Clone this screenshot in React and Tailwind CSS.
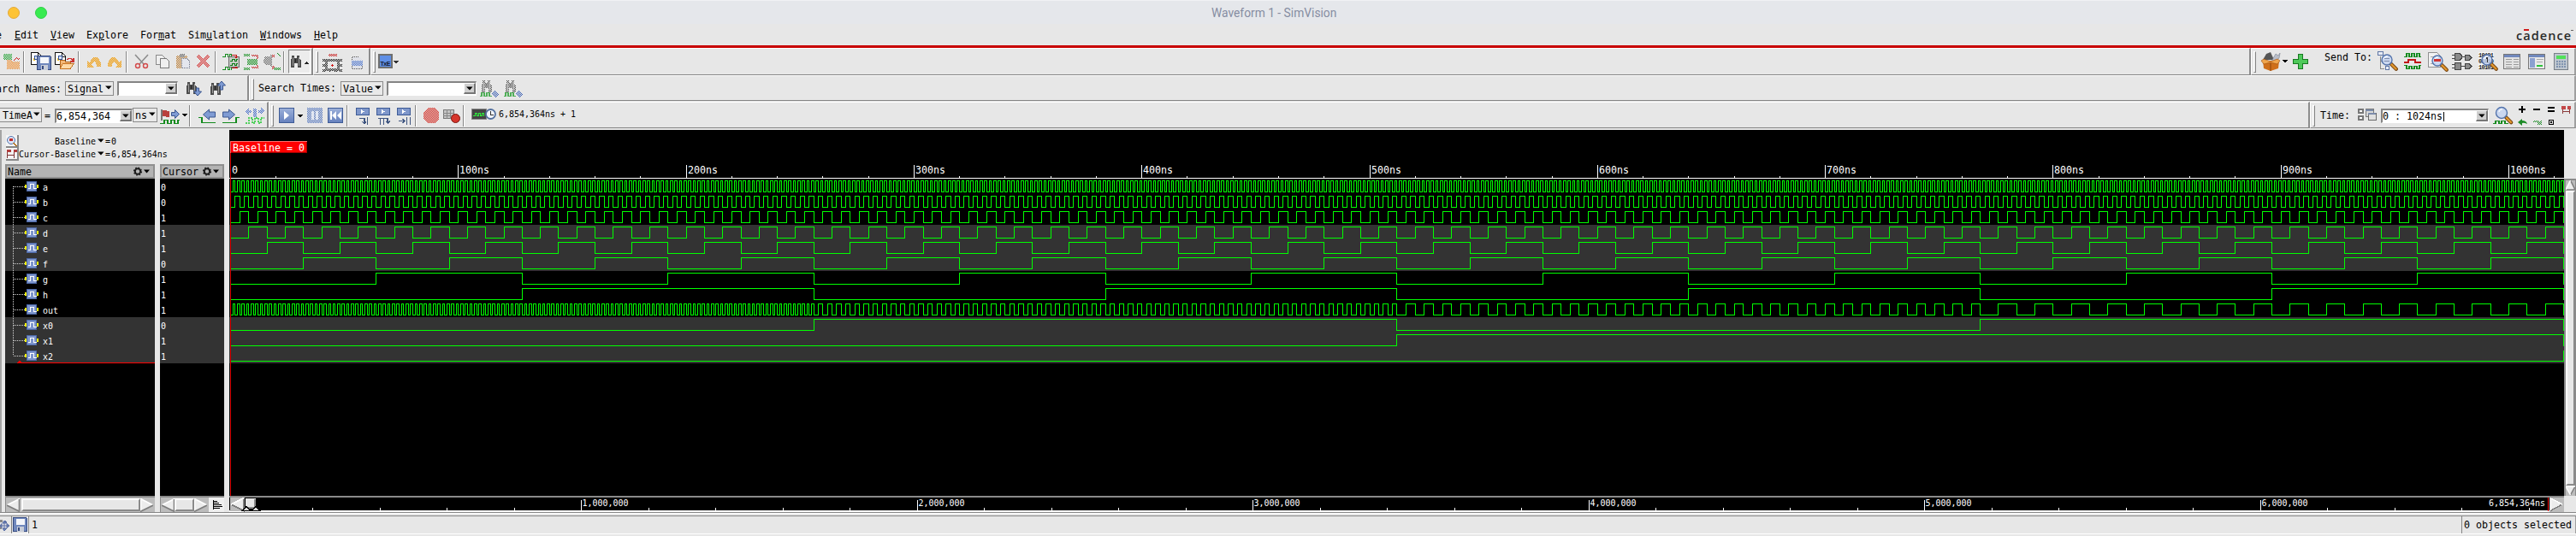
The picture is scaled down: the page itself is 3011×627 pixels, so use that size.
import React from "react";

const MONO = "font-['DejaVu_Sans_Mono',monospace]";

/* Icon drawn in window coordinates; x/w/y/h give the region it covers. */
function Ico({ x, w, y = 57, h = 30, className = "", children }) {
  return (
    <svg className={"block shrink-0 " + className} width={w} height={h} viewBox={`${x} ${y} ${w} ${h}`} shapeRendering="crispEdges">
      {children}
    </svg>
  );
}

function Panel({ className, children }) {
  return (
    <div className={"flex shrink-0 items-start overflow-hidden border-t border-l border-t-white border-l-white border-r-2 border-b border-b-[#858585] bg-[#e7e7e7] " + className}>
      {children}
    </div>
  );
}

const Sep = () => (
  <div className="mt-[3px] h-[25px] w-[2px] shrink-0 border-l border-l-[#858585] border-r border-r-white" />
);
const Handle = () => (
  <div className="mt-[3px] ml-[2px] h-[25px] w-[3px] shrink-0 border-l border-l-white border-t border-t-white border-r border-b border-r-[#858585] border-b-[#858585]" />
);
const T = ({ className = "", small = false, children }) => (
  <span className={"shrink-0 whitespace-pre " + (small ? "text-[9.965px] leading-[15px] " : "text-[11.63px] leading-[16px] ") + className}>
    {children}
  </span>
);

const Caret = ({ className = "" }) => (
  <svg className={"block shrink-0 " + className} width="8" height="5" viewBox="0 0 8 5">
    <path d="M0 .5H7.5L4 4.5Z" fill="#000" />
  </svg>
);

function Select({ className, children }) {
  return (
    <div className={"flex h-[17px] shrink-0 items-center justify-between border border-[#8a8a8a] bg-[#e9e9e9] pr-[1px] " + className}>
      <T>{children}</T>
      <Caret className="-mt-[2px]" />
    </div>
  );
}

function Entry({ className, children }) {
  return (
    <div className={"flex h-[17px] shrink-0 justify-between border-t-2 border-l-2 border-r border-b border-t-[#858585] border-l-[#858585] border-r-white border-b-white bg-white " + className}>
      <T className="-mt-px">{children}</T>
      <div className="flex h-[13px] w-[14px] items-center justify-center border-t border-l border-r-2 border-b-2 border-t-white border-l-white border-r-[#777] border-b-[#777] bg-[#cfcfcf]">
        <Caret />
      </div>
    </div>
  );
}

const DIS = { mask: "url(#stipple)" };

function Defs() {
  return (
    <svg className="block h-0 w-0">
      <defs>
        <pattern id="chk" width="2" height="2" patternUnits="userSpaceOnUse">
          <path d="M0 0h1v1h-1zM1 1h1v1h-1z" fill="#fff" />
        </pattern>
        <mask id="stipple" maskUnits="userSpaceOnUse" x="0" y="0" width="3011" height="627">
          <rect width="3011" height="627" fill="url(#chk)" />
        </mask>
        <linearGradient id="blu" x1="0" y1="0" x2="0" y2="1">
          <stop offset="0" stopColor="#9db1da" />
          <stop offset="1" stopColor="#6580bd" />
        </linearGradient>
      </defs>
    </svg>
  );
}

const Floppy = ({ x, y }) => (
  <g>
    <path d={`M${x} ${y}h15l1 1v15h-16z`} fill="#7088bd" stroke="#34497f" strokeWidth="1" />
    <path d={`M${x + 3} ${y + 1}h10v7h-10z`} fill="#f4f6fa" />
    <path d={`M${x + 4} ${y + 10}h8v6h-8z`} fill="#c8cdd8" />
    <path d={`M${x + 5} ${y + 11}h2v4h-2z`} fill="#34497f" />
  </g>
);
const Doc = ({ x }) => (
  <g>
    <path d={`M${x} 61.5h8l4 4v10h-12z`} fill="#fff" stroke="#111" />
    <path d={`M${x + 8} 61v5h4`} fill="none" stroke="#111" />
    <path d={`M${x + 2} 68h2v3h-2z`} fill="#f5c52c" />
    <path d={`M${x + 4} 65.5h4v4h-4z`} fill="#dfe6f5" stroke="#34569a" />
  </g>
);
const Folder = ({ x, y }) => (
  <g>
    <path d={`M${x} ${y + 11}V${y + 1}h5l1 2h6v3`} fill="#f3b877" stroke="#b4651c" />
    <path d={`M${x} ${y + 11}l3 -6h13l-4 6z`} fill="#ffd9a6" stroke="#c4711f" />
  </g>
);
const Binoc = ({ x, y }) => (
  <g>
    <path d={`M${x + 2} ${y}h3v3h3v-3h3v3l2 3v8h-4v-5h-4v5h-4v-8l1 -3z`} fill="#4c4c4c" />
    <path d={`M${x + 3.5} ${y + 2}v10M${x + 10.5} ${y + 2}v10`} stroke="#9c9c9c" />
    <path d={`M${x + 6} ${y + 4}h1v4h-1z`} fill="#222" />
  </g>
);
const Wave = ({ x, y, c = "#138a1d", n = 3 }) => {
  let d = `M${x} ${y + 4}h2`;
  for (let i = 0; i < n; i++) d += "v-4h3v4h3";
  return <path d={d} fill="none" stroke={c} strokeWidth="1.3" />;
};
const Mag = ({ x, y, r = 6 }) => (
  <g shapeRendering="auto">
    <path d={`M${x + r * 0.8} ${y + r * 0.8}l6 6`} stroke="#6d3c0b" strokeWidth="4.2" strokeLinecap="round" />
    <path d={`M${x + r * 0.9} ${y + r * 0.9}l5.2 5.2`} stroke="#e0962e" strokeWidth="2.4" strokeLinecap="round" />
    <circle cx={x} cy={y} r={r} fill="#c3d3f2" fillOpacity=".8" stroke="#5474ac" strokeWidth="1.4" />
    <path d={`M${x - 3} ${y - 1}a3.4 3.4 0 0 1 4 -3`} fill="none" stroke="#fff" strokeWidth="1.2" />
  </g>
);
const Btn = ({ x, y = 125 }) => (
  <rect x={x + 0.5} y={y + 0.5} width="17" height="17" fill="url(#blu)" stroke="#3f5c97" strokeWidth="1.6" />
);
const Arrow = ({ d }) => <path d={d} fill="#7f9bd3" stroke="#3b568f" shapeRendering="auto" />;

function ToolbarMain() {
  return (
    <div className="flex h-8">
      <Panel className="w-[366px] border-l-0 border-r-[#8c8c8c]">
        <Ico x={0} w={27}>
          <g style={DIS}>
            <path d="M4 63h10v7h-10z" fill="#1fa030" />
            <path d="M16 71q3-5 7-1" stroke="#c81818" strokeWidth="2" fill="none" />
            <path d="M8 70h6l1 2h8v9h-15z" fill="#e78c32" />
          </g>
          <path d="M8 72h6l1 2h7v6h-14z" fill="#f2b780" fillOpacity=".5" />
        </Ico>
        <Sep />
        <Ico x={29} w={33}>
          <Doc x={36.5} />
          <Floppy x={43.5} y={65.5} />
        </Ico>
        <Ico x={62} w={29}>
          <Doc x={64.5} />
          <path d="M78 70q4-4 7 1M86 68v4h-4" fill="none" stroke="#c33" strokeWidth="1.3" />
          <Folder x={70.5} y={69} />
        </Ico>
        <Sep />
        <Ico x={93} w={30}>
          <path d="M118 78c0-14-10-14-13-5l-3-2v8h8l-3-3c3-6 6-4 6 2z" fill="#e08f14" style={DIS} />
          <path d="M118 78c0-14-10-14-13-5l-3-2v8h8l-3-3c3-6 6-4 6 2z" fill="#f7b53a" fillOpacity=".45" />
        </Ico>
        <Ico x={123} w={24}>
          <path d="M126 78c0-14 10-14 13-5l3-2v8h-8l3-3c-3-6-6-4-6 2z" fill="#e08f14" style={DIS} />
          <path d="M126 78c0-14 10-14 13-5l3-2v8h-8l3-3c-3-6-6-4-6 2z" fill="#f7b53a" fillOpacity=".45" />
        </Ico>
        <Sep />
        <Ico x={149} w={29}>
          <g fill="none" shapeRendering="auto">
            <path d="M158 64l10 11M173 64l-10 11" stroke="#8d8d8d" strokeWidth="1.6" />
            <circle cx="161" cy="77" r="2.5" stroke="#d24a4a" strokeWidth="1.4" />
            <circle cx="170" cy="77" r="2.5" stroke="#d24a4a" strokeWidth="1.4" />
          </g>
        </Ico>
        <Ico x={178} w={24}>
          <path d="M182.500 64.500h7l3 3v8h-10z" fill="#efefef" stroke="#8a8a8a" />
          <path d="M187.500 68.500h7l3 3v8h-10z" fill="#efefef" stroke="#7a7a7a" />
        </Ico>
        <Ico x={202} w={24}>
          <g style={DIS}>
            <path d="M206 65h13v15h-13z" fill="#b97a2f" />
            <path d="M210 63h6v4h-6z" fill="#555" />
          </g>
          <path d="M213 69h6l3 3v8h-9z" fill="#e4e6ee" />
          <path d="M212.500 68.500h6l3 3v8h-9z" fill="none" stroke="#6a7083" style={DIS} />
        </Ico>
        <Ico x={226} w={25}>
          <path d="M231 65l13 13M244 65l-13 13" stroke="#d52b2b" strokeWidth="3.500" style={DIS} />
          <path d="M231 65l13 13M244 65l-13 13" stroke="#d98a8a" strokeWidth="2.500" strokeOpacity=".5" shapeRendering="auto" />
        </Ico>
        <Sep />
        <Ico x={253} w={31}>
          <path d="M260 66.500h3v-3h3v3h2v-3h2v3" fill="none" stroke="#138a1d" />
          <path d="M260 81.500h3v-3h3v3h2v-3h2v3" fill="none" stroke="#138a1d" />
          <path d="M271 64.500h5v4M271 79.500h5v-3" fill="none" stroke="#c01818" />
          <rect x="267.500" y="66.500" width="12" height="12" fill="#c5ccc5" stroke="#6c6c6c" />
          <path d="M273 66h5l-2 3zM273 80h5l-2-3z" fill="#c01818" />
          <path d="M269 71.500h2v-2h3v2h2v-2h2M269 76.500h2v-2h3v2h2v-2h2" fill="none" stroke="#0b7a15" />
        </Ico>
        <Ico x={284} w={23}>
          <g style={DIS}>
            <path d="M285 63h7v3h-7zM285 79h7v3h-7zM289 69h12v7h-12z" fill="#0b8a15" />
            <path d="M294 64h8v5h-2v-3h-6zM294 80h8v-4h-2v2h-6z" fill="#c01818" />
          </g>
        </Ico>
        <Ico x={307} w={24}>
          <g style={DIS}>
            <path d="M309 66h7v-2h2v14h-2v-2h-5l-3-4z" fill="#666" />
            <path d="M318 64h3v3h-3zM318 77h3v4h-3z" fill="#c01818" />
            <path d="M320 65l3-2 5 3v-2l-4-2zM320 79h8v3h-8z" fill="#0b8a15" />
          </g>
        </Ico>
        <Sep />
        <div className="ml-[4px] mt-[1px] flex h-[28px] w-[26px] border-t border-l border-r border-b border-t-[#858585] border-l-[#858585] border-r-white border-b-white bg-[#ececec]">
          <Ico x={338} y={59} w={24} h={26}>
            <Binoc x={339} y={65} />
            <path d="M355 75h6l-3-3z" fill="#222" />
          </Ico>
        </div>
      </Panel>
      <Panel className="w-[67px] border-r-[#8c8c8c]">
        <Handle />
        <Ico x={372} w={34}>
          <g style={DIS}>
            <path d="M384 63h10v3h-10z" fill="#c81818" />
            <path d="M381.500 70.500h14v11h-14z" fill="none" stroke="#111" strokeWidth="3" />
            <path d="M377 69h3v3h-3zM377 75h3v3h-3zM377 81h3v3h-3zM397 69h3v3h-3zM397 75h3v3h-3zM397 81h3v3h-3zM384 82h3v2h-3zM391 82h3v2h-3z" fill="#111" />
          </g>
          <path d="M388 75h1v3h-1zM387 76h3v1h-3z" fill="#d01818" />
        </Ico>
        <Ico x={406} w={24}>
          <path d="M411.500 66.500h8l4 4v10h-12z" fill="#dfe1e8" />
          <g style={DIS}>
            <path d="M411.500 66.500h8l4 4v10h-12z" fill="none" stroke="#555" />
            <path d="M411 71h13v6h-13z" fill="#4b74cc" />
          </g>
        </Ico>
      </Panel>
      <Panel className="w-[2198px] border-r-[#8c8c8c]">
        <Handle />
        <Ico x={439} w={32}>
          <rect x="443" y="64" width="14.500" height="15" fill="#5f8fe6" stroke="#6f6f6f" strokeWidth="2" />
          <text x="444.500" y="76.500" fontSize="7" fontWeight="bold" fontFamily="Liberation Sans" fill="#14182c" textLength="12">TxE</text>
          <path d="M460 71h6l-3 4z" fill="#333" />
        </Ico>
      </Panel>
      <Panel className="w-[380px] border-r-[#a0a0a0]">
        <Handle />
        <Ico x={2637} w={80}>
          <g shapeRendering="auto">
            <path d="M2645 70l4-7 5-2 4 9z" fill="#555" />
            <path d="M2655 72l5-9 3 2 2-3-1 6-5 4z" fill="#b9bec9" stroke="#7b8190" strokeWidth=".6" />
            <path d="M2645 71h19l-1 9-9 3-8-3z" fill="#cf6f1a" />
            <path d="M2643 71l3-2 8 3 8-3 3 2-3 4-8-2-8 2z" fill="#f0a54c" stroke="#9c4c0c" strokeWidth=".6" />
            <path d="M2654 74v9" stroke="#8c440b" />
          </g>
          <path d="M2668 70h6l-3 3.500z" fill="#000" />
          <path d="M2686.500 63.500h5v6h6v5h-6v6h-5v-6h-6v-5h6z" fill="#4fc95a" stroke="#177a21" />
        </Ico>
        <T className="mt-[2px] w-[61px]">Send To:</T>
        <Ico x={2778} w={28}>
          <path d="M2782 66v14h5M2782 71h5" fill="none" stroke="#888" />
          <path d="M2779.500 60.500h6v4h-6zM2788.500 77.500h4v4h-4z" fill="#e8ecf5" stroke="#5f76a5" />
          <Mag x={2790} y={70} />
          <path d="M2787 68.500h6M2787 71.500h6" stroke="#7f8dab" />
        </Ico>
        <Ico x={2806} w={28}>
          <path d="M2810 66.500h3v-4h3v4h3v-4h3v4h3v-4h3v4h2M2810 76.500h3v4h3v-3h3v3h3v-3h3v3h3v-4h2" fill="none" stroke="#138a1d" strokeWidth="1.300" />
          <path d="M2810 73h5v-3h8v3h7" fill="none" stroke="#c01818" strokeWidth="2" />
        </Ico>
        <Ico x={2834} w={31}>
          <path d="M2838.500 61.500h10l4 4v13h-14z" fill="#f2f2f2" stroke="#909090" />
          <path d="M2841 66h6M2841 74h6" stroke="#aaa" />
          <Mag x={2849} y={71} />
          <path d="M2845 69h8v3h-8z" fill="#cf3434" />
        </Ico>
        <Ico x={2865} w={29}>
          <g fill="#8b8b8b" stroke="#444">
            <path d="M2869 62.500h6l2 2v4l-2 2h-6zM2869 73.500h7v8h-7zM2881 64.500h5l2 2v2l-2 2h-5zM2881 74.500h5l2 2v2l-2 2h-5z" />
          </g>
          <path d="M2866 64.500h3M2866 68.500h3M2866 75.500h3M2866 79.500h3M2877 66.500h4M2876 77.500h5M2888 67.500h2M2888 77.500h2" stroke="#444" />
        </Ico>
        <Ico x={2894} w={30}>
          <rect x="2897" y="61" width="18" height="20" fill="#f6f6f6" />
          <g fontSize="7" fontWeight="bold" fontFamily="Liberation Mono" fill="#222">
            <text x="2897" y="67" textLength="18">10101</text>
            <text x="2897" y="73.500" textLength="18">01010</text>
            <text x="2897" y="80.500" textLength="18">10101</text>
          </g>
          <Mag x={2907} y={70} />
          <path d="M2906 68h1.500v5" stroke="#333" fill="none" strokeWidth="1.200" />
        </Ico>
        <Ico x={2924} w={28}>
          <rect x="2926.500" y="63.500" width="19" height="17" fill="#e3e3e3" stroke="#777" />
          <path d="M2927 64h18v3h-18z" fill="#7088bd" />
          <path d="M2929 69.500h7M2929 72.500h7M2929 75.500h7M2929 78.500h7M2938 69.500h6M2938 72.500h6M2938 75.500h6M2938 78.500h6" stroke="#9a9a9a" />
        </Ico>
        <Ico x={2952} w={29}>
          <rect x="2955.500" y="63.500" width="19" height="17" fill="#eaeaea" stroke="#777" />
          <path d="M2956 64h18v3h-18z" fill="#7088bd" />
          <path d="M2957 68h6v11h-6z" fill="#8ba0d0" />
          <path d="M2965 69.500h8M2965 72.500h7" stroke="#aaa" />
          <path d="M2965 76h7v2h-7z" fill="#2fc43b" />
        </Ico>
        <Ico x={2981} w={26}>
          <rect x="2985.500" y="62.500" width="16" height="19" fill="#bfc7cf" stroke="#777f87" />
          <path d="M2988 65h11v4h-11z" fill="#50e158" />
          <path d="M2988 72h11M2988 75h11M2988 78h11" stroke="#7f93b0" strokeWidth="2" strokeDasharray="2 1" />
        </Ico>
      </Panel>
    </div>
  );
}

function ToolbarSearch() {
  return (
    <div className="flex h-[31px] pb-[1px]">
      <Panel className="w-[291px] border-l-0 border-r-[#8c8c8c]">
        <T className="-ml-[19px] mt-[7px] w-[95px]">Search Names:</T>
        <Select className="mt-[6px] w-[57px] pl-[2px]">Signal</Select>
        <Entry className="ml-[4px] mt-[6px] w-[71px]" />
        <Ico x={208} y={89} w={33} h={28}>
          <Binoc x={217} y={96} />
          <Arrow d="M229.500 103h3v4h3l-4.500 5-4.500-5h3z" />
        </Ico>
        <Ico x={241} y={89} w={29} h={28}>
          <Binoc x={245} y={97} />
          <Arrow d="M257.500 105h3v-5h3l-4.500-5-4.500 5h3z" />
        </Ico>
      </Panel>
      <Panel className="w-[2720px] border-r-[#a0a0a0]">
        <Handle />
        <T className="ml-[5px] mt-[6px] w-[96px]">Search Times:</T>
        <Select className="mt-[6px] w-[50px] pl-[2px]">Value</Select>
        <Entry className="ml-[4px] mt-[6px] w-[105px]" />
        <Ico x={557} y={89} w={29} h={28}>
          <g style={DIS}>
            <Binoc x={562} y={94} />
            <path d="M574 110l5-4 4 4-4 4z" fill="#3f62b4" />
          </g>
          <Wave x={561} y={108.5} n={2} c="#4fae57" />
        </Ico>
        <Ico x={586} y={89} w={28} h={28}>
          <g style={DIS}>
            <Binoc x={590} y={94} />
            <path d="M602 110l5-4 4 4-4 4z" fill="#3f62b4" />
          </g>
          <Wave x={589} y={108.5} n={2} c="#4fae57" />
        </Ico>
      </Panel>
    </div>
  );
}

const Step = ({ x, children }) => (
  <>
    <rect x={x + 0.5} y="125.500" width="15" height="8" fill="#7f97cb" stroke="#3f5c97" />
    <path d={`M${x + 6} 127l4 2.500-4 2.500z`} fill="#fff" />
    <g stroke="#3f5580" fill="none" strokeWidth="1.300">{children}</g>
  </>
);

function ToolbarTime() {
  return (
    <div className="flex h-[33px] pb-[2px]">
      <Panel className="w-[314px] border-l-0 border-r-[#8c8c8c]">
        <Select className="-ml-[1px] mt-[6px] w-[50px] pl-[3px]">TimeA</Select>
        <T className="ml-[3px] mt-[7px] w-[12px]">=</T>
        <Entry className="mt-[7px] w-[91px]">6,854,364</Entry>
        <Select className="mt-[6px] w-[29px] pl-[2px]">ns</Select>
        <Ico x={184} y={119} w={37} h={30}>
          <path d="M189 127v13" stroke="#777" strokeWidth="1.500" />
          <path d="M190 128h4l1 1h3v7h-4l-1-1h-3z" fill="#b9403e" />
          <Arrow d="M200.500 130.500h4v-3l5 5-5 5v-3h-4z" />
          <path d="M187 143.500h5v-4h4v4h4v-4h4v4h4v-4h2" fill="none" stroke="#138a1d" strokeWidth="1.400" />
          <path d="M213 132h6l-3 3.500z" fill="#000" />
        </Ico>
        <Sep />
        <Ico x={223} y={119} w={33} h={30}>
          <path d="M232 136.500h4v6h16" fill="none" stroke="#138a1d" strokeWidth="1.500" />
          <Arrow d="M251.500 130v6h-7v3l-7-6 7-6v3z" />
        </Ico>
        <Ico x={256} y={119} w={27} h={30}>
          <path d="M260 142.500h16v-6h4" fill="none" stroke="#138a1d" strokeWidth="1.500" />
          <Arrow d="M260.500 130v6h7v3l7-6-7-6v3z" />
        </Ico>
        <Ico x={283} y={119} w={28} h={30}>
          <path d="M287 129l4-4v3h3v3h-3v3zM309 129l-4-4v3h-3v3h3v3zM296 126h4v10h-4z" fill="#3f68c8" style={DIS} />
          <path d="M287 143h4v-6h4v6h3v-6h4v6h3v-6h4" fill="none" stroke="#4fd05b" strokeWidth="1.500" strokeDasharray="2 1" />
        </Ico>
      </Panel>
      <Panel className="w-[2386px] border-r-[#8c8c8c]">
        <Handle />
        <Ico x={320} y={119} w={35} h={30}>
          <Btn x={326} />
          <path d="M332 129l6 5-6 5z" fill="#fff" shapeRendering="auto" />
          <path d="M348 133h6l-3 3.500z" fill="#000" />
        </Ico>
        <Ico x={355} y={119} w={25} h={30}>
          <rect x="359" y="125" width="18" height="18" fill="#5073bd" style={DIS} />
          <path d="M364 129h3v10h-3zM369 129h3v10h-3z" fill="#fff" fillOpacity=".7" />
        </Ico>
        <Ico x={380} y={119} w={25} h={30}>
          <Btn x={383} />
          <path d="M386 129h2v10h-2zM393 129v10l-5-5zM399 129v10l-5-5z" fill="#fff" shapeRendering="auto" />
        </Ico>
        <Sep />
        <Ico x={407} y={119} w={30} h={30}>
          <Step x={416}><path d="M420 137.500h6v6M423 141l3 3 2-3M429.500 136v9" /></Step>
        </Ico>
        <Ico x={437} y={119} w={24} h={30}>
          <Step x={440}><path d="M442 137.500h11v5M444.500 138v7M448.500 138v7M451 141l2.500 2.500 2-3" /></Step>
        </Ico>
        <Ico x={461} y={119} w={24} h={30}>
          <Step x={464}><path d="M466 140.500h6M470 138l3 2.500-3 2.500M475.500 136v9M479.500 136v9" /></Step>
        </Ico>
        <Sep />
        <Ico x={487} y={119} w={29} h={30}>
          <path d="M500 125h8l5 5v8l-5 5h-8l-5-5v-8z" fill="#c93028" style={DIS} />
          <path d="M500 125h8l5 5v8l-5 5h-8l-5-5v-8z" fill="#e2655f" fillOpacity=".35" />
        </Ico>
        <Ico x={516} y={119} w={25} h={30}>
          <rect x="518.500" y="127.500" width="12" height="10" fill="#c4c4c4" stroke="#777" />
          <path d="M522.500 127v11M526.500 127v11M518 131h13M518 134.500h13" stroke="#888" />
          <circle cx="532.500" cy="137.500" r="5" fill="#d6362c" stroke="#7d1610" shapeRendering="auto" />
        </Ico>
        <Sep />
        <Ico x={543} y={119} w={40} h={30}>
          <rect x="551.500" y="126.500" width="17" height="12" fill="#444" stroke="#888" />
          <path d="M553 134.500h2v-3h2v3h2v-3h2v3h2v-3h2v3" fill="none" stroke="#2ef03c" />
          <circle cx="573.500" cy="132.500" r="5.500" fill="#f2f5fb" stroke="#54719f" strokeWidth="1.800" shapeRendering="auto" />
          <path d="M573.500 129v4h3" fill="none" stroke="#333" />
        </Ico>
        <T small className="mt-[6px]">6,854,364ns + 1</T>
      </Panel>
      <Panel className="w-[311px] border-r-[#a0a0a0]">
        <Handle />
        <T className="ml-[6px] mt-[7px] w-[40px]">Time:</T>
        <Ico x={2752} y={119} w={31} h={30}>
          <rect x="2757" y="127" width="5" height="4" fill="#fff" stroke="#777" strokeWidth="1.500" />
          <rect x="2757" y="135" width="5" height="4" fill="#fff" stroke="#777" strokeWidth="1.500" />
          <path d="M2765.500 126.500h9v9h-9z" fill="#d8d8d8" stroke="#7a7a7a" />
          <path d="M2768.500 131.500h9v8h-9z" fill="#e0e0e0" stroke="#6a6a6a" />
          <path d="M2765 127h9v2h-9zM2768 131h9v2h-9z" fill="#7c8cab" />
        </Ico>
        <Entry className="mt-[7px] w-[126px]">
          0 : 1024ns<span className="ml-[1px] inline-block h-[11px] w-px bg-black align-middle" />
        </Entry>
        <Ico x={2909} y={119} w={32} h={30}>
          <path d="M2914 143.500h3v-3h4v3h3v-3h4v3h4" fill="none" stroke="#138a1d" strokeWidth="1.400" />
          <Mag x={2924} y={131} r={6.500} />
        </Ico>
        <Ico x={2941} y={119} w={68} h={30}>
          <path d="M2944 127h8M2948 123v8M2961 127h8M2978 125h8M2978 129h8" stroke="#000" strokeWidth="2" />
          <path d="M2995.500 123v9M3003.500 123v9M2995 129.500h8" stroke="#8c3a3a" fill="none" />
          <path d="M2994 123h5v4h-5zM3001 123h4v4h-4z" fill="#c24848" />
          <path d="M2943 142l5-4v2q5 0 6 4-4-2-6-1v3z" fill="#1c8a26" shapeRendering="auto" />
          <path d="M2961 141q4-3 7 0l3-2v6h-5l1-2q-3-2-6 0z" fill="#1c8a26" style={DIS} />
          <rect x="2979.500" y="139.500" width="5" height="5" fill="none" stroke="#000" />
          <path d="M2981 141h2v2h-2z" fill="#000" />
        </Ico>
      </Panel>
    </div>
  );
}

const SIGNALS = [
  { name: "a", v: "0", half: 1 },
  { name: "b", v: "0", half: 2 },
  { name: "c", v: "1", half: 4 },
  { name: "d", v: "1", half: 8 },
  { name: "e", v: "1", half: 16 },
  { name: "f", v: "0", half: 32 },
  { name: "g", v: "1", half: 64 },
  { name: "h", v: "1", half: 128 },
  { name: "out", v: "1", out: true },
  { name: "x0", v: "0", half: 256 },
  { name: "x1", v: "1", half: 512 },
  { name: "x2", v: "1", half: 1024 },
];
const END = 1024;
const px = (t) => Math.round(269 + 2.663 * t) + 0.5;

function level(sig, t) {
  const half = sig.out ? 2 ** Math.floor(t / 256) : sig.half;
  return Math.floor(t / half) % 2;
}
function tracePath(sig, top) {
  const y = (l) => top + (l ? 2.5 : 15.5);
  let cur = level(sig, 0);
  let d = `M269 ${y(cur)}`;
  for (let t = 1; t < END; t++) {
    const l = level(sig, t);
    if (l !== cur) {
      d += `H${px(t)}V${y(l)}`;
      cur = l;
    }
  }
  return d + `H2996.5V${y(1 - cur)}`;
}
const shade = (i) => (Math.floor(i / 3) % 2 ? "bg-[#333333]" : "bg-black");

function Waveforms() {
  const minor = [];
  for (let t = 0; t <= 1020; t += 20) minor.push(t);
  return (
    <svg className="block" width="2729" height="428" viewBox="268 152 2729 428" shapeRendering="crispEdges">
      <rect x="268" y="152" width="2729" height="428" fill="#000" />
      <rect x="268" y="263" width="2729" height="54" fill="#333" />
      <rect x="268" y="371" width="2729" height="54" fill="#333" />
      <path d="M268 208.500H2997" stroke="#fff" />
      {minor.map((t) => (
        <path key={t} d={`M${px(t)} ${t % 100 ? 206 : 193}V208`} stroke="#fff" />
      ))}
      <g fill="#fff" fontSize="11.63" fontFamily="DejaVu Sans Mono">
        {[0, 1, 2, 3, 4, 5, 6, 7, 8, 9, 10].map((k) => (
          <text key={k} x={px(k * 100) + 1.5} y="203">{k ? `${k}00ns` : "0"}</text>
        ))}
      </g>
      {SIGNALS.map((s, i) => (
        <path key={s.name} d={tracePath(s, 209 + i * 18)} fill="none" stroke="#00ff00" />
      ))}
      <path d="M269.500 165V580" stroke="#e00000" />
      <rect x="269" y="165" width="90" height="14" fill="#ff0000" />
      <path d="M269 165.500H359M269.500 165V179" stroke="#ff7070" />
      <path d="M270 178.500H359M358.500 166V179" stroke="#a00000" />
      <text x="272" y="177" fill="#fff" fontSize="11.63" fontFamily="DejaVu Sans Mono">Baseline = 0</text>
    </svg>
  );
}

const Gear = ({ className }) => (
  <svg className={"block " + className} width="20" height="11" viewBox="0 0 20 11">
    <circle cx="5" cy="5.500" r="3.200" fill="none" stroke="#1c1c1c" strokeWidth="2" />
    <circle cx="5" cy="5.500" r="4.400" fill="none" stroke="#1c1c1c" strokeWidth="1.400" strokeDasharray="1.700 1.750" />
    <path d="M12 3.500h7L15.500 7.500Z" fill="#000" />
  </svg>
);

const ArrowL = () => (
  <svg className="block shrink-0" width="15" height="16" viewBox="0 0 15 16">
    <path d="M0 8L15 0V16Z" fill="#ececec" />
    <path d="M0 8L15 .5" stroke="#fff" strokeWidth="1.600" />
    <path d="M0 8L15 15.500M14.500 1V15" stroke="#7d7d7d" strokeWidth="1.600" fill="none" />
  </svg>
);
const ArrowR = () => (
  <svg className="block shrink-0" width="15" height="16" viewBox="0 0 15 16">
    <path d="M15 8L0 0V16Z" fill="#ececec" />
    <path d="M15 8L.5 .5V15" stroke="#fff" strokeWidth="1.600" fill="none" />
    <path d="M15 8L0 15.500" stroke="#7d7d7d" strokeWidth="1.600" />
  </svg>
);
const Thumb = ({ className }) => (
  <div className={"shrink-0 border-2 border-t-white border-l-white border-r-[#8a8a8a] border-b-[#8a8a8a] bg-[#e7e7e7] " + className} />
);

function NameColumn() {
  return (
    <div className="ml-[4px] flex w-[175px] flex-col">
      <div className="flex h-[17px] items-center justify-between border-2 border-[#8f8f8f] bg-[#b3b3b3] pl-px">
        <T>Name</T>
        <Gear className="mr-[3px]" />
      </div>
      <div className="h-[371px] bg-black">
        {SIGNALS.map((s, i) => (
          <div key={s.name} className={"flex h-[18px] items-center " + shade(i)}>
            <svg className="block shrink-0" width="44" height="18" viewBox="6 0 44 18" shapeRendering="crispEdges">
              <path d={`M15.500 ${i ? 1 : 9}V${i < 11 ? 18 : 9}M16 9.500H29`} stroke="#d8d8d8" strokeDasharray="1 1" />
              <path d="M29 7h2v4h-2zM43 7h2v4h-2z" fill="#ffff00" />
              <rect x="31.500" y="3.500" width="11" height="11" fill="#7d95cc" stroke="#4a66a5" />
              <path d="M33 11.500h2.500v-5h4v5h3" fill="none" stroke="#fff" />
              {i === 11 && <path d="M20 18l2-3h2l2 3z" fill="#f00" />}
            </svg>
            <T small className="mt-[2px] text-white">{s.name}</T>
          </div>
        ))}
        <div className="ml-[14px] -mt-[1px] h-px bg-[#ff0000]" />
      </div>
      <div className="flex h-[19px] items-center border-t-2 border-l border-[#8a8a8a] bg-[#bcbcbc] pl-[1px]">
        <ArrowL />
        <Thumb className="ml-[2px] h-[15px] w-[139px]" />
        <ArrowR />
      </div>
    </div>
  );
}

function CursorColumn() {
  return (
    <div className="ml-[6px] flex w-[75px] flex-col">
      <div className="flex h-[17px] items-center justify-between border-2 border-[#8f8f8f] bg-[#b3b3b3] pl-px">
        <T>Cursor</T>
        <Gear className="mr-[3px]" />
      </div>
      <div className="h-[371px] bg-black">
        {SIGNALS.map((s, i) => (
          <div key={s.name} className={"flex h-[18px] items-center pl-[1px] " + shade(i)}>
            <T small className="mt-[2px] text-white">{s.v}</T>
          </div>
        ))}
      </div>
      <div className="flex h-[19px] items-center border-t-2 border-l border-[#8a8a8a] bg-[#bcbcbc] pl-[1px]">
        <ArrowL />
        <Thumb className="h-[15px] w-[23px]" />
        <ArrowR />
        <svg className="ml-[2px] block shrink-0 bg-[#efefef]" width="18" height="17" viewBox="244 582 18 17" shapeRendering="crispEdges">
          <path d="M249.500 585v11M250 586.500h4M250 588.500h6M250 590.500h9M250 592.500h10M250 594.500h7" stroke="#000" />
        </svg>
      </div>
    </div>
  );
}

function OverviewRuler() {
  const ticks = [];
  for (let k = 1; k <= 34; k++) ticks.push(k);
  const X = (k) => Math.round(286.9 + k * 78.5) + 0.5;
  return (
    <svg className="block" width="2729" height="19" viewBox="268 580 2729 19" shapeRendering="crispEdges">
      <rect x="268" y="580" width="2729" height="19" fill="#000" />
      <rect x="268" y="580" width="2729" height="2" fill="#8a8a8a" />
      <path d="M268 598H2980" stroke="#fff" strokeWidth="2" />
      {ticks.map((k) => (
        <path key={k} d={`M${X(k)} ${k % 5 ? 594 : 585}V598`} stroke="#fff" />
      ))}
      <g fill="#fff" fontSize="9.965" fontFamily="DejaVu Sans Mono">
        {[1, 2, 3, 4, 5, 6].map((k) => (
          <text key={k} x={X(k * 5) + 1} y="592">{`${k},000,000`}</text>
        ))}
        <text x="2909" y="592">6,854,364ns</text>
      </g>
      <rect x="269" y="582" width="17" height="16" fill="#bcbcbc" />
      <path d="M270 590l15-7.500v15z" fill="#ececec" />
      <path d="M270 590l15 7.500v-15" fill="none" stroke="#7d7d7d" strokeWidth="1.500" />
      <path d="M270 590l15-7.500" stroke="#fff" strokeWidth="1.500" />
      <rect x="287" y="583" width="12" height="11" fill="#e7e7e7" />
      <path d="M298 584v10h-9" fill="none" stroke="#8a8a8a" strokeWidth="2" />
      <path d="M283 597.500l5-5 5 5zM294 597.500l5-5 5 5z" fill="#d8d8d8" stroke="#000" />
      <path d="M2978.500 582V598" stroke="#f00" />
      <rect x="2980" y="582" width="17" height="17" fill="#bcbcbc" />
      <path d="M2981 582.500l14 7.500-14 7.500z" fill="#ececec" />
      <path d="M2981 597.500l14-7.500" stroke="#7d7d7d" strokeWidth="1.500" />
      <path d="M2981.500 597v-14l13.500 7" fill="none" stroke="#fff" strokeWidth="1.500" />
    </svg>
  );
}

export default function App() {
  return (
    <div className={"h-[627px] w-[3011px] overflow-hidden bg-[#e7e7e7] text-black " + MONO}>
      <Defs />
      <div className="flex h-[28px] items-center border-t border-t-[#f0f1f4] bg-[#e5e7eb]">
        <div className="ml-[9px] h-[14px] w-[14px] rounded-full border border-[#e3a93a] bg-[#fdc334]" />
        <div className="ml-[18px] h-[14px] w-[14px] rounded-full border border-[#2fcf47] bg-[#38eb50]" />
        <div className="ml-[1361px] whitespace-pre font-[Roboto,sans-serif] text-[13.800px] leading-[20px] text-[#868da2]">Waveform 1 - SimVision</div>
      </div>
      <div className="flex h-[25px] items-center">
        <T className="-ml-[26px] w-[43px]">File</T>
        <T className="w-[42px]"><u>E</u>dit</T>
        <T className="w-[42px]"><u>V</u>iew</T>
        <T className="w-[63px]">Ex<u>p</u>lore</T>
        <T className="w-[56px]">For<u>m</u>at</T>
        <T className="w-[84px]">Sim<u>u</u>lation</T>
        <T className="w-[63px]"><u>W</u>indows</T>
        <T><u>H</u>elp</T>
        <svg className="ml-auto block" width="72" height="20" viewBox="2939 30 72 20">
          <text x="2941" y="45.500" fontFamily="Open Sans" fontWeight="600" fontSize="14.500" fill="#2b2b2b" textLength="64">cadence</text>
          <rect x="2950" y="33" width="6" height="2" fill="#d01818" />
          <path d="M3005 34.500h3" stroke="#666" />
        </svg>
      </div>
      <div className="h-[3px] bg-[#c80000]" />
      <ToolbarMain />
      <ToolbarSearch />
      <ToolbarTime />
      <div className="flex h-[447px]">
        <div className="w-[2px] shrink-0 bg-[#a4a4a4]" />
        <div className="flex w-[266px] shrink-0 flex-col">
          <div className="flex h-[40px] flex-col pl-[5px] pt-[6px]">
            <div className="flex h-[15px] items-center">
              <Ico x={7} y={158} w={15} h={15}>
                <path d="M7 158h14v14h-14z" fill="#f4f4f4" />
                <path d="M21 158v14h-14" fill="none" stroke="#888" strokeWidth="1.500" />
                <circle cx="13" cy="164" r="4.500" fill="#dbe4f6" stroke="#5474ac" shapeRendering="auto" />
                <path d="M11 162h4v3h-4z" fill="#c0302c" />
                <path d="M16 167l3 4" stroke="#b0701c" strokeWidth="1.500" />
              </Ico>
              <T small className="ml-[42px]">Baseline</T>
              <Caret className="ml-[2px] -mt-[2px]" />
              <T small className="ml-[1px]">=</T>
              <T small className="ml-[1px]">0</T>
            </div>
            <div className="flex h-[15px] items-center">
              <Ico x={7} y={173} w={15} h={15}>
                <path d="M7 173h14v14h-14z" fill="#f4f4f4" />
                <path d="M21 173v14h-14" fill="none" stroke="#888" strokeWidth="1.500" />
                <path d="M8.500 175v10M16.500 175v10M9 181.500h7" stroke="#803434" />
                <path d="M8 175h5v3h-5zM16 175h4v3h-4z" fill="#b03c3c" />
              </Ico>
              <T small>Cursor-Baseline</T>
              <Caret className="ml-[2px] -mt-[2px]" />
              <T small className="ml-[1px]">=</T>
              <T small className="ml-[1px]">6,854,364ns</T>
            </div>
          </div>
          <div className="flex">
            <NameColumn />
            <CursorColumn />
          </div>
        </div>
        <div className="w-[2729px] shrink-0">
          <Waveforms />
          <OverviewRuler />
        </div>
        <div className="flex w-[14px] flex-col">
          <div className="h-[57px] bg-[#e7e7e7]" />
          <div className="flex h-[371px] flex-col items-center border-t-2 border-l-2 border-r border-[#8a8a8a] bg-[#bcbcbc]">
            <svg className="block shrink-0" width="11" height="12" viewBox="0 0 11 12">
              <path d="M5.500 0L11 11H0Z" fill="#ececec" />
              <path d="M5.500 0L11 11H0" stroke="#7d7d7d" strokeWidth="1.500" fill="none" />
              <path d="M5.500 0L0 11" stroke="#fff" strokeWidth="1.500" />
            </svg>
            <Thumb className="w-[11px] grow" />
            <svg className="block shrink-0" width="11" height="12" viewBox="0 0 11 12">
              <path d="M5.500 11L11 1H0Z" fill="#ececec" />
              <path d="M5.500 11L11 1" stroke="#7d7d7d" strokeWidth="1.500" fill="none" />
              <path d="M11 1H0L5.500 11" stroke="#fff" strokeWidth="1.500" fill="none" />
            </svg>
          </div>
        </div>
      </div>
      <div className="h-px bg-[#858585]" />
      <div className="h-px bg-white" />
      <div className="h-[2px] bg-[#e7e7e7]" />
      <div className="flex h-[22px] items-center border-t border-t-[#858585] border-b border-b-white">
        <Ico x={0} y={604} w={13} h={20}>
          <path d="M0 608h3v3h-3zM0 616h2v3h-2z" fill="#888" />
          <path d="M6 609l2 2-2 0zM5 609l-2 3h5zM5 621l-2-3h5zM11 615l-3-2.500v5zM0 615l2-2.500v5zM5 611v8M1 615h9" fill="#7088bd" stroke="#5a6fa5" shapeRendering="auto" />
        </Ico>
        <div className="flex h-[20px] w-[20px] border-l border-r border-l-[#858585] border-r-white">
          <Ico x={14} y={604} w={18} h={20}>
            <Floppy x={15.500} y={605.500} />
          </Ico>
        </div>
        <div className="h-[20px] w-[2px] border-l border-l-[#858585]" />
        <T className="ml-[2px]">1</T>
        <div className="ml-auto flex h-[20px] w-[134px] items-center border-l border-l-[#858585] border-r border-r-[#a0a0a0] pl-[2px]">
          <T>0 objects selected</T>
        </div>
      </div>
    </div>
  );
}
